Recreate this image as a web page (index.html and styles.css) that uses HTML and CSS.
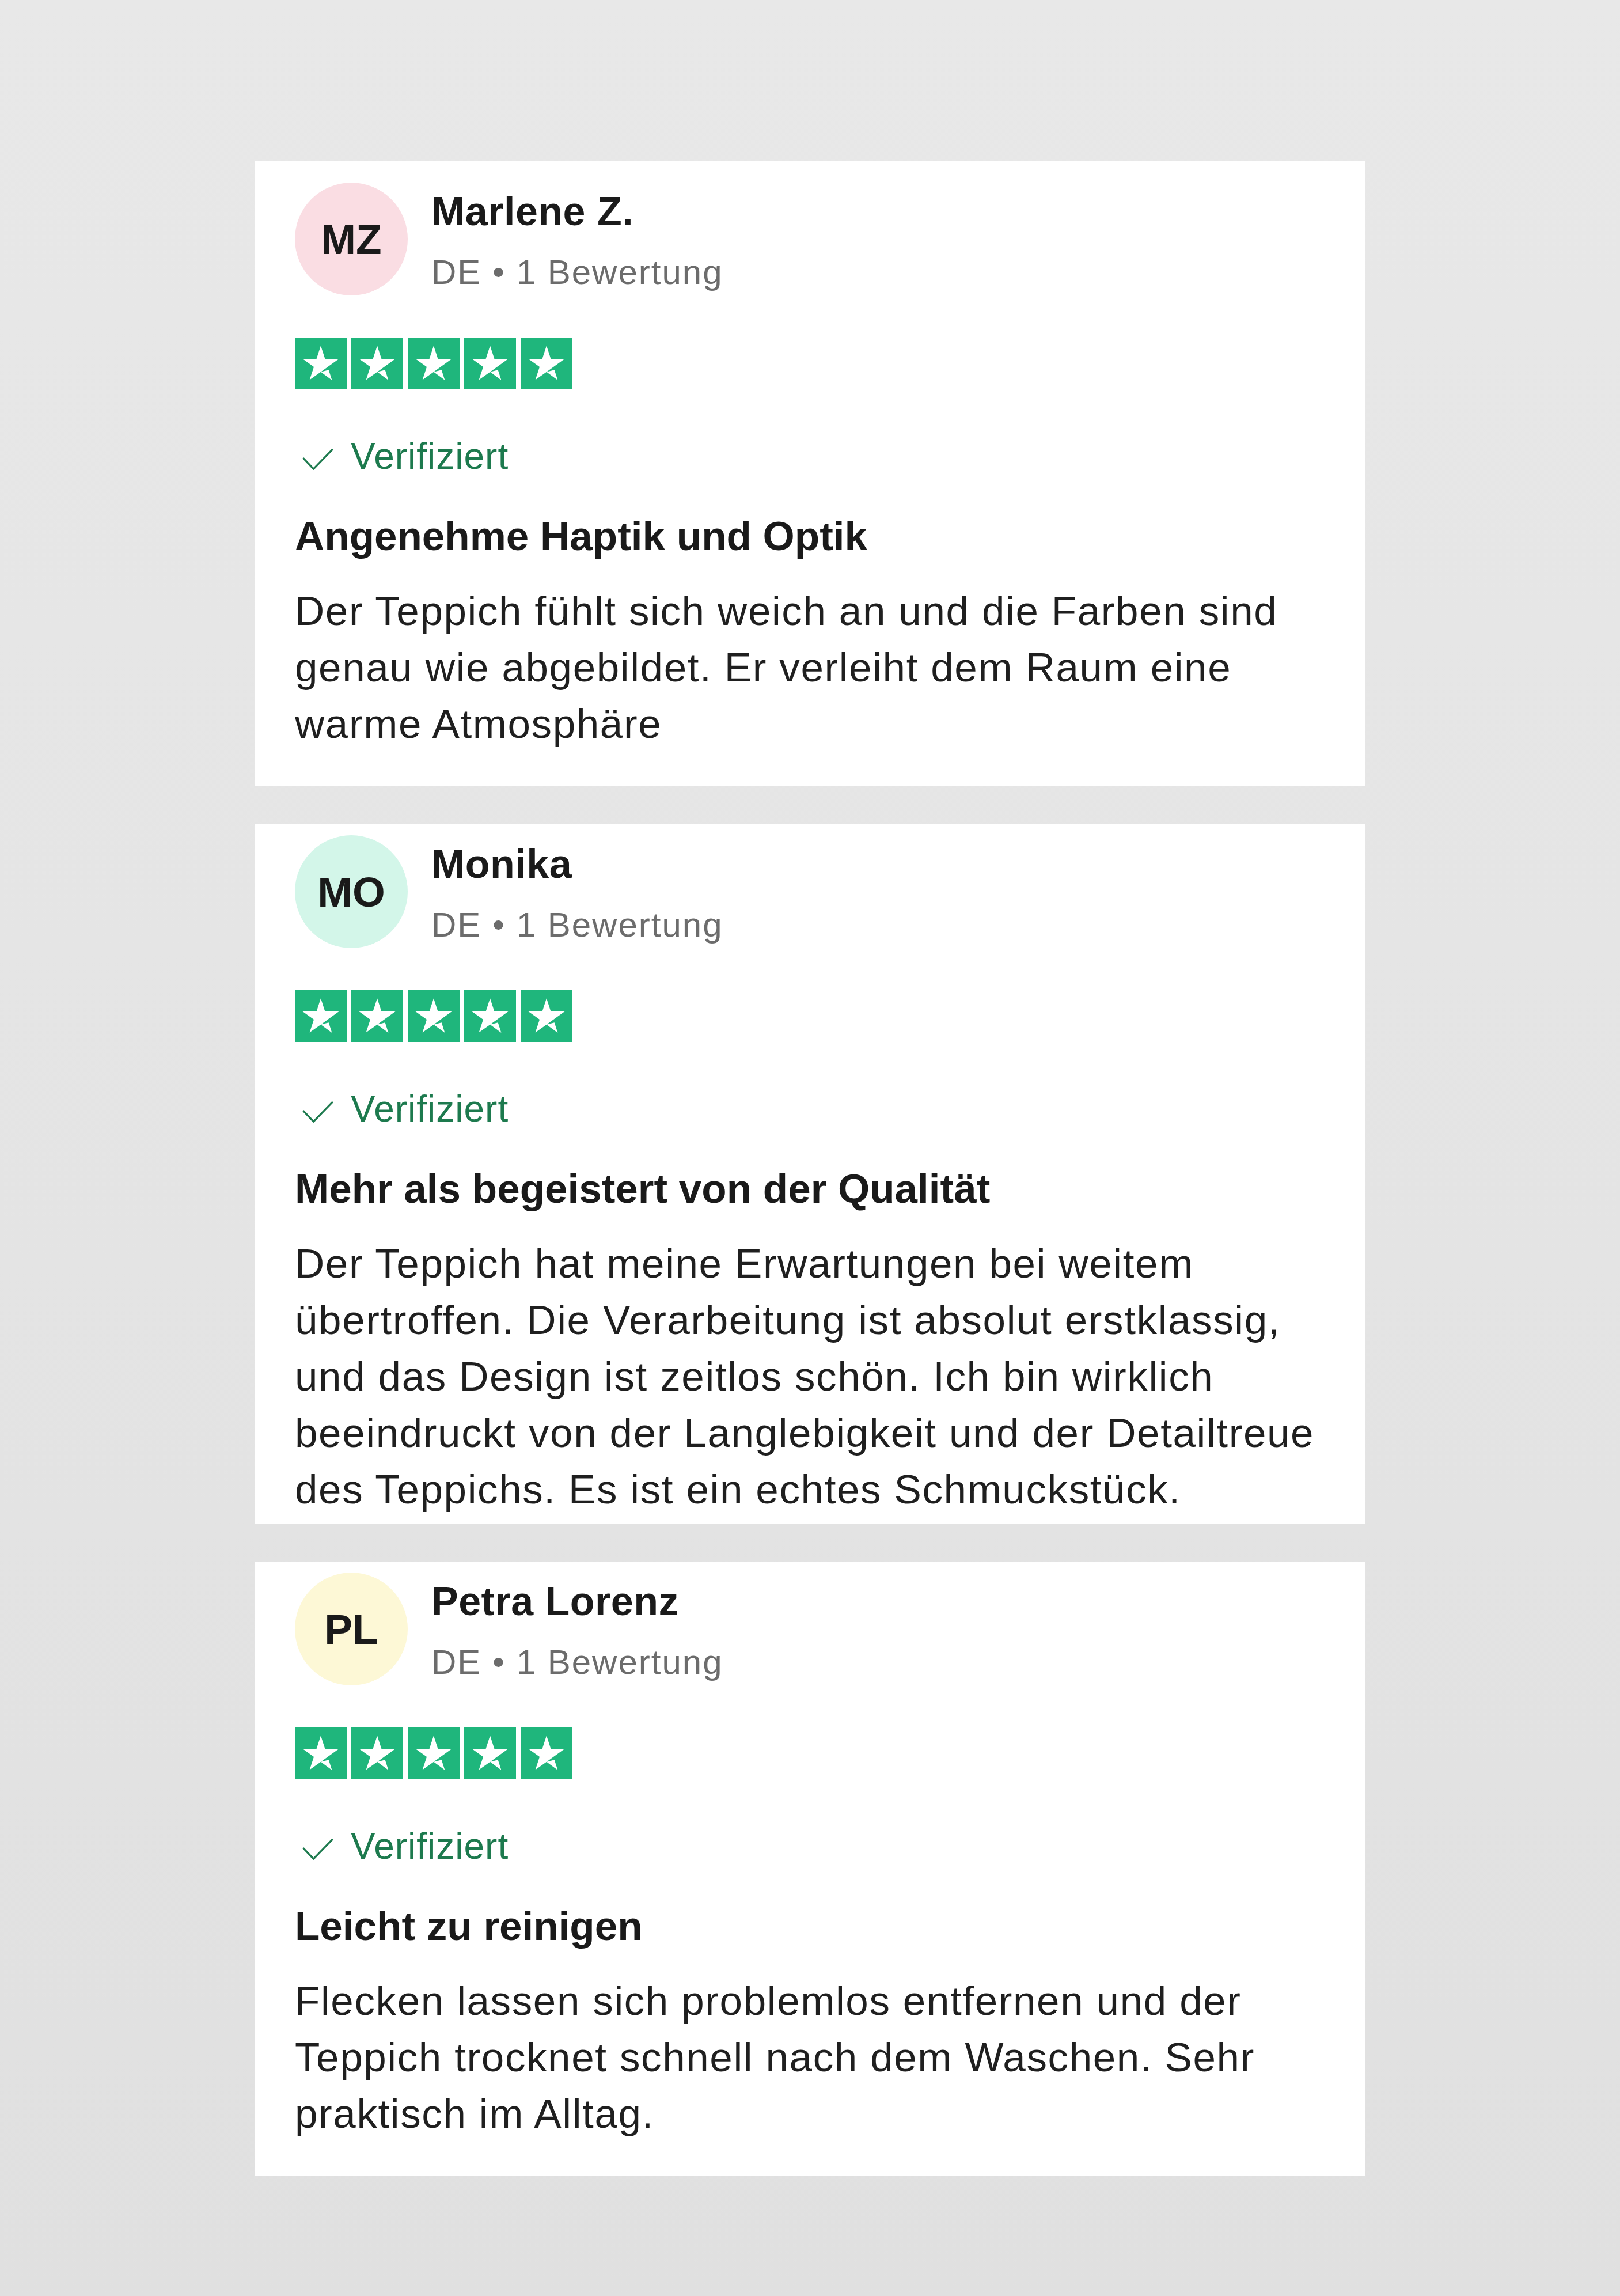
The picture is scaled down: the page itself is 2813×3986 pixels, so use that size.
FILE: index.html
```html
<!DOCTYPE html>
<html lang="de">
<head>
<meta charset="utf-8">
<title>Bewertungen</title>
<link rel="stylesheet" href="styles.css">
</head>
<body>
<main class="reviews">

  <article class="card card--first">
    <header class="head">
      <div class="avatar avatar--pink">MZ</div>
      <div class="who">
        <div class="name">Marlene Z.</div>
        <div class="meta">DE • 1 Bewertung</div>
      </div>
    </header>
    <div class="stars" aria-label="5 Sterne">
      <span class="star"><svg viewBox="0 0 24 24"><path d="M12 15.925l3.65-.925 1.525 4.7L12 15.925zm8.4-6.075h-6.425L12 3.8l-1.975 6.05H3.6l5.2 3.725-1.975 6.05 5.2-3.725 3.2-2.325 5.175-3.725z"/></svg></span>
      <span class="star"><svg viewBox="0 0 24 24"><path d="M12 15.925l3.65-.925 1.525 4.7L12 15.925zm8.4-6.075h-6.425L12 3.8l-1.975 6.05H3.6l5.2 3.725-1.975 6.05 5.2-3.725 3.2-2.325 5.175-3.725z"/></svg></span>
      <span class="star"><svg viewBox="0 0 24 24"><path d="M12 15.925l3.65-.925 1.525 4.7L12 15.925zm8.4-6.075h-6.425L12 3.8l-1.975 6.05H3.6l5.2 3.725-1.975 6.05 5.2-3.725 3.2-2.325 5.175-3.725z"/></svg></span>
      <span class="star"><svg viewBox="0 0 24 24"><path d="M12 15.925l3.65-.925 1.525 4.7L12 15.925zm8.4-6.075h-6.425L12 3.8l-1.975 6.05H3.6l5.2 3.725-1.975 6.05 5.2-3.725 3.2-2.325 5.175-3.725z"/></svg></span>
      <span class="star"><svg viewBox="0 0 24 24"><path d="M12 15.925l3.65-.925 1.525 4.7L12 15.925zm8.4-6.075h-6.425L12 3.8l-1.975 6.05H3.6l5.2 3.725-1.975 6.05 5.2-3.725 3.2-2.325 5.175-3.725z"/></svg></span>
    </div>
    <div class="verified">
      <svg class="check" viewBox="0 0 56 40"><polyline points="2,18 20,37 54,2"/></svg>
      <span>Verifiziert</span>
    </div>
    <h2 class="title">Angenehme Haptik und Optik</h2>
    <p class="text">Der Teppich fühlt sich weich an und die Farben sind genau wie abgebildet. Er verleiht dem Raum eine warme Atmosphäre</p>
  </article>

  <article class="card card--tight card--cut">
    <header class="head">
      <div class="avatar avatar--mint">MO</div>
      <div class="who">
        <div class="name">Monika</div>
        <div class="meta">DE • 1 Bewertung</div>
      </div>
    </header>
    <div class="stars" aria-label="5 Sterne">
      <span class="star"><svg viewBox="0 0 24 24"><path d="M12 15.925l3.65-.925 1.525 4.7L12 15.925zm8.4-6.075h-6.425L12 3.8l-1.975 6.05H3.6l5.2 3.725-1.975 6.05 5.2-3.725 3.2-2.325 5.175-3.725z"/></svg></span>
      <span class="star"><svg viewBox="0 0 24 24"><path d="M12 15.925l3.65-.925 1.525 4.7L12 15.925zm8.4-6.075h-6.425L12 3.8l-1.975 6.05H3.6l5.2 3.725-1.975 6.05 5.2-3.725 3.2-2.325 5.175-3.725z"/></svg></span>
      <span class="star"><svg viewBox="0 0 24 24"><path d="M12 15.925l3.65-.925 1.525 4.7L12 15.925zm8.4-6.075h-6.425L12 3.8l-1.975 6.05H3.6l5.2 3.725-1.975 6.05 5.2-3.725 3.2-2.325 5.175-3.725z"/></svg></span>
      <span class="star"><svg viewBox="0 0 24 24"><path d="M12 15.925l3.65-.925 1.525 4.7L12 15.925zm8.4-6.075h-6.425L12 3.8l-1.975 6.05H3.6l5.2 3.725-1.975 6.05 5.2-3.725 3.2-2.325 5.175-3.725z"/></svg></span>
      <span class="star"><svg viewBox="0 0 24 24"><path d="M12 15.925l3.65-.925 1.525 4.7L12 15.925zm8.4-6.075h-6.425L12 3.8l-1.975 6.05H3.6l5.2 3.725-1.975 6.05 5.2-3.725 3.2-2.325 5.175-3.725z"/></svg></span>
    </div>
    <div class="verified">
      <svg class="check" viewBox="0 0 56 40"><polyline points="2,18 20,37 54,2"/></svg>
      <span>Verifiziert</span>
    </div>
    <h2 class="title">Mehr als begeistert von der Qualität</h2>
    <p class="text">Der Teppich hat meine Erwartungen bei weitem übertroffen. Die Verarbeitung ist absolut erstklassig, und das Design ist zeitlos schön. Ich bin wirklich beeindruckt von der Langlebigkeit und der Detailtreue des Teppichs. Es ist ein echtes Schmuckstück.</p>
  </article>

  <article class="card card--tight">
    <header class="head">
      <div class="avatar avatar--yellow">PL</div>
      <div class="who">
        <div class="name">Petra Lorenz</div>
        <div class="meta">DE • 1 Bewertung</div>
      </div>
    </header>
    <div class="stars" aria-label="5 Sterne">
      <span class="star"><svg viewBox="0 0 24 24"><path d="M12 15.925l3.65-.925 1.525 4.7L12 15.925zm8.4-6.075h-6.425L12 3.8l-1.975 6.05H3.6l5.2 3.725-1.975 6.05 5.2-3.725 3.2-2.325 5.175-3.725z"/></svg></span>
      <span class="star"><svg viewBox="0 0 24 24"><path d="M12 15.925l3.65-.925 1.525 4.7L12 15.925zm8.4-6.075h-6.425L12 3.8l-1.975 6.05H3.6l5.2 3.725-1.975 6.05 5.2-3.725 3.2-2.325 5.175-3.725z"/></svg></span>
      <span class="star"><svg viewBox="0 0 24 24"><path d="M12 15.925l3.65-.925 1.525 4.7L12 15.925zm8.4-6.075h-6.425L12 3.8l-1.975 6.05H3.6l5.2 3.725-1.975 6.05 5.2-3.725 3.2-2.325 5.175-3.725z"/></svg></span>
      <span class="star"><svg viewBox="0 0 24 24"><path d="M12 15.925l3.65-.925 1.525 4.7L12 15.925zm8.4-6.075h-6.425L12 3.8l-1.975 6.05H3.6l5.2 3.725-1.975 6.05 5.2-3.725 3.2-2.325 5.175-3.725z"/></svg></span>
      <span class="star"><svg viewBox="0 0 24 24"><path d="M12 15.925l3.65-.925 1.525 4.7L12 15.925zm8.4-6.075h-6.425L12 3.8l-1.975 6.05H3.6l5.2 3.725-1.975 6.05 5.2-3.725 3.2-2.325 5.175-3.725z"/></svg></span>
    </div>
    <div class="verified">
      <svg class="check" viewBox="0 0 56 40"><polyline points="2,18 20,37 54,2"/></svg>
      <span>Verifiziert</span>
    </div>
    <h2 class="title">Leicht zu reinigen</h2>
    <p class="text">Flecken lassen sich problemlos entfernen und der Teppich trocknet schnell nach dem Waschen. Sehr praktisch im Alltag.</p>
  </article>

</main>
</body>
</html>
```

FILE: styles.css
```css
* {
  box-sizing: border-box;
}

html, body {
  margin: 0;
  padding: 0;
}

body {
  min-height: 3986px;
  background: linear-gradient(180deg, #e8e8e8 0%, #e4e4e4 55%, #e0e0e0 100%);
  font-family: "Liberation Sans", Arial, Helvetica, sans-serif;
  color: #1c1c1c;
}

.reviews {
  width: 1929px;
  margin: 0 auto;
  padding-top: 280px;
  display: flex;
  flex-direction: column;
  gap: 66px;
}

.card {
  background: #ffffff;
  padding: 39px 72px 59px 70px;
}

.card--tight {
  padding-top: 21px;
}

.card--cut {
  padding-bottom: 10px;
}

.head {
  display: flex;
  align-items: flex-start;
  gap: 41px;
}

.avatar {
  flex: 0 0 196px;
  width: 196px;
  height: 196px;
  margin-top: -2px;
  border-radius: 50%;
  display: flex;
  align-items: center;
  justify-content: center;
  font-weight: 700;
  font-size: 73px;
  color: #1a1a1a;
}

.avatar--pink { background: #fadde3; }
.avatar--mint { background: #d3f6e9; }
.avatar--yellow { background: #fdf8d6; }

.who {
  display: flex;
  flex-direction: column;
}

.name {
  font-size: 70px;
  line-height: 96px;
  font-weight: 700;
  letter-spacing: 0.5px;
  color: #1a1a1a;
}

.meta {
  margin-top: 18px;
  font-size: 60px;
  line-height: 80px;
  letter-spacing: 2px;
  color: #6c6c6c;
}

.stars {
  display: flex;
  gap: 8px;
  margin-top: 73px;
}

.star {
  width: 90px;
  height: 90px;
  background: #1fb67c;
  display: flex;
}

.star svg {
  width: 90px;
  height: 90px;
  fill: #ffffff;
}

.verified {
  display: flex;
  align-items: center;
  margin-top: 76px;
  height: 80px;
  font-size: 64px;
  line-height: 80px;
  letter-spacing: 1px;
  color: #1d7a4e;
}

.check {
  width: 54px;
  height: 38px;
  margin: 12px 30px 0 13px;
  fill: none;
  stroke: #1d7a4e;
  stroke-width: 3.5;
  stroke-linecap: round;
  stroke-linejoin: round;
}

.title {
  margin: 54px 0 0;
  font-size: 71px;
  line-height: 90px;
  font-weight: 700;
  color: #1a1a1a;
}

.text {
  margin: 36px 0 0;
  font-size: 71px;
  line-height: 98px;
  letter-spacing: 1.6px;
  color: #1f1f1f;
}
```
